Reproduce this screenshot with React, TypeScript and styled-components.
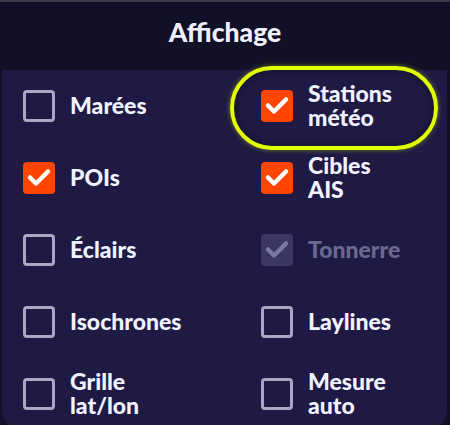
import React from "react";
import styled, { createGlobalStyle, css } from "styled-components";

const GlobalStyle = createGlobalStyle`
  html, body { margin: 0; padding: 0; background: #121027; }
  body { font-family: "Lato", "Noto Sans", "DejaVu Sans", sans-serif; }
`;

const Screen = styled.div`
  width: 450px;
  height: 425px;
  box-sizing: border-box;
  display: flex;
  flex-direction: column;
  background: #121027;
  border-top: 2px solid #3a3947;
  overflow: hidden;
`;

const Header = styled.div`
  height: 68px;
  flex: none;
  box-sizing: border-box;
  padding-bottom: 8px;
  display: flex;
  align-items: center;
  justify-content: center;
  color: #eef0ff;
  font-size: 26.5px;
  font-weight: 900;
`;

const Panel = styled.div`
  flex: 1;
  margin: 0 3px 0 2px;
  padding-left: 21px;
  background: #1f1a44;
  border-radius: 0 0 20px 20px;
  display: grid;
  grid-template-columns: 238px 1fr;
  grid-auto-rows: 72px;
`;

const Item = styled.label<{ $highlight?: boolean }>`
  position: relative;
  display: flex;
  align-items: center;
  gap: 15px;
  ${(p) =>
    p.$highlight &&
    css`
      &::before {
        content: "";
        position: absolute;
        left: -31px;
        top: -4px;
        width: 208px;
        height: 84px;
        box-sizing: border-box;
        border: 4px solid #e2ff00;
        border-radius: 42px;
        box-shadow: 0 0 5px rgba(226, 255, 0, 0.45),
          inset 0 0 9px rgba(0, 0, 0, 0.45);
        pointer-events: none;
      }
    `}
`;

const Box = styled.span<{ $checked?: boolean; $disabled?: boolean }>`
  width: 32px;
  height: 32px;
  flex: none;
  box-sizing: border-box;
  border-radius: 4px;
  display: flex;
  align-items: center;
  justify-content: center;
  ${(p) =>
    p.$disabled
      ? css`
          background: #3b3762;
        `
      : p.$checked
      ? css`
          background: #ff4500;
        `
      : css`
          border: 3px solid #aaa7c2;
        `}
`;

const Label = styled.span<{ $disabled?: boolean }>`
  color: ${(p) => (p.$disabled ? "#6b6990" : "#f1f2ff")};
  font-size: 23px;
  font-weight: 900;
  line-height: 24px;
  padding-bottom: 3px;
  white-space: pre-line;
`;

const Check = ({ color }: { color: string }) => (
  <svg width="32" height="32" viewBox="0 0 32 32">
    <polyline
      points="7,15.5 13,21.5 25,9.5"
      fill="none"
      stroke={color}
      strokeWidth="4.5"
      strokeLinecap="round"
      strokeLinejoin="round"
    />
  </svg>
);

type Opt = {
  label: string;
  checked?: boolean;
  disabled?: boolean;
  highlight?: boolean;
};

const options: Opt[] = [
  { label: "Marées" },
  { label: "Stations\nmétéo", checked: true, highlight: true },
  { label: "POIs", checked: true },
  { label: "Cibles\nAIS", checked: true },
  { label: "Éclairs" },
  { label: "Tonnerre", checked: true, disabled: true },
  { label: "Isochrones" },
  { label: "Laylines" },
  { label: "Grille\nlat/lon" },
  { label: "Mesure\nauto" },
];

export default function App() {
  return (
    <>
      <GlobalStyle />
      <Screen>
        <Header>Affichage</Header>
        <Panel>
          {options.map((o) => (
            <Item key={o.label} $highlight={o.highlight}>
              <Box $checked={o.checked} $disabled={o.disabled}>
                {o.checked && (
                  <Check color={o.disabled ? "#7b799f" : "#ffffff"} />
                )}
              </Box>
              <Label $disabled={o.disabled}>{o.label}</Label>
            </Item>
          ))}
        </Panel>
      </Screen>
    </>
  );
}
